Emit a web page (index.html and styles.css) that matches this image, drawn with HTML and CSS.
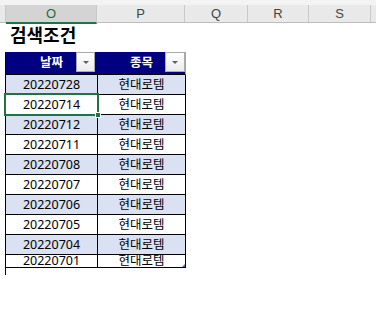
FILE: index.html
```html
<!DOCTYPE html>
<html lang="ko">
<head>
<meta charset="utf-8">
<link rel="stylesheet" href="styles.css">
</head>
<body>
<div class="topband"></div>
<div class="colheads">
  <div class="ch ch-corner"></div>
  <div class="ch ch-o sel">O</div>
  <div class="ch ch-p">P</div>
  <div class="ch ch-q">Q</div>
  <div class="ch ch-r">R</div>
  <div class="ch ch-s">S</div>
  <div class="ch ch-rest"></div>
</div>
<div class="sheet">
  <div class="title">검색조건</div>
  <div class="tbl">
    <div class="hd">날짜<span class="fbtn"><span class="tri"></span></span></div>
    <div class="hd hd-last">종목<span class="fbtn fbtn-p"><span class="tri"></span></span></div>

    <div class="td band">20220728</div><div class="td band">현대로템</div>
    <div class="td active">20220714<span class="selbox"><span class="handle"></span></span></div><div class="td">현대로템</div>
    <div class="td band">20220712</div><div class="td band">현대로템</div>
    <div class="td">20220711</div><div class="td">현대로템</div>
    <div class="td band">20220708</div><div class="td band">현대로템</div>
    <div class="td">20220707</div><div class="td">현대로템</div>
    <div class="td band">20220706</div><div class="td band">현대로템</div>
    <div class="td">20220705</div><div class="td">현대로템</div>
    <div class="td band">20220704</div><div class="td band">현대로템</div>
    <div class="td short">20220701</div><div class="td short corner">현대로템<span class="resize"></span></div>
  </div>
</div>
</body>
</html>
```

FILE: styles.css
```css
* { box-sizing: border-box; }
html, body { margin: 0; padding: 0; background: #fff; }
body {
  width: 376px;
  height: 322px;
  overflow: hidden;
  font-family: "Noto Sans", "Noto Sans CJK KR", sans-serif;
  color: #000;
}
.topband { height: 5px; background: #f3f3f3; }
.colheads {
  display: flex;
  height: 18px;
  background: #e9e9e9;
  border-bottom: 1px solid #bdbdbd;
}
.ch {
  height: 17px;
  border-right: 1px solid #c9c9c9;
  font-family: "Liberation Sans", "DejaVu Sans", sans-serif;
  font-size: 13px;
  line-height: 17px;
  text-align: center;
  color: #444;
}
.ch-corner { width: 6px; }
.ch-o { width: 91px; }
.ch-p { width: 88px; }
.ch-q { width: 63px; }
.ch-r { width: 61px; }
.ch-s { width: 62px; }
.ch-rest { flex: 1; border-right: none; }
.ch.sel {
  background: #d4d4d4;
  color: #1f6b42;
  height: 19px;
  border-bottom: 2px solid #217346;
}
.sheet { padding-left: 5px; }
.title {
  height: 29px;
  padding-left: 5px;
  font-size: 18px;
  font-weight: 700;
  line-height: 25px;
}
.tbl {
  display: grid;
  grid-template-columns: 92px 88px;
  grid-template-rows: 23px;
  grid-auto-rows: 20px;
  width: 180px;
  border-left: 1px solid #000;
}
.hd {
  position: relative;
  background: #000080;
  color: #fff;
  font-weight: 700;
  font-size: 12.5px;
  line-height: 21px;
  text-align: center;
  border-right: 1px solid #000080;
  border-bottom: 1px solid #000;
}
.hd-last { border-right: 1px solid #8ea9db; }
.fbtn {
  position: absolute;
  top: 0;
  right: 2px;
  width: 19px;
  height: 20px;
  border: 1px solid #a9a9a9;
  background: linear-gradient(#ffffff, #ececec);
  display: flex;
  align-items: center;
  justify-content: center;
}
.fbtn-p { right: 0; width: 20px; }
.tri {
  width: 0;
  height: 0;
  border-left: 3px solid transparent;
  border-right: 3px solid transparent;
  border-top: 3px solid #5f5f5f;
}
.td {
  position: relative;
  font-size: 12.5px;
  line-height: 19px;
  text-align: center;
  border-right: 1px solid #000;
  border-bottom: 1px solid #000;
  background: #fff;
}
.td.band { background: #d9e1f2; }
.td.active { z-index: 2; }
.td.short {
  height: 13px;
  line-height: 12px;
  overflow: hidden;
}
.tbl .td.short { align-self: start; }
.selbox {
  position: absolute;
  left: -2px;
  top: -2px;
  right: -2px;
  bottom: -2px;
  border: 2px solid #217346;
}
.handle {
  position: absolute;
  right: -4px;
  bottom: -4px;
  width: 6px;
  height: 6px;
  background: #217346;
  border: 1px solid #fff;
}
.corner { overflow: visible; }
.resize {
  position: absolute;
  right: 0;
  bottom: 0;
  width: 0;
  height: 0;
  border-left: 3px solid transparent;
  border-bottom: 3px solid #4a6fb5;
}
```
